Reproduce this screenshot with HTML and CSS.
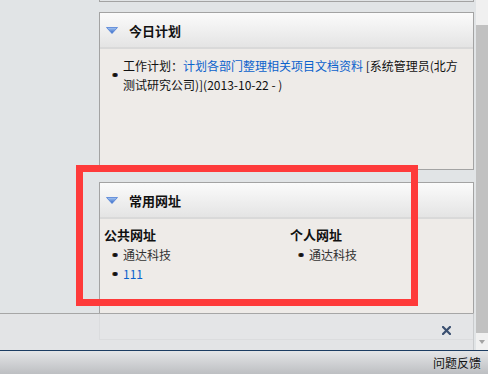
FILE: index.html
```html
<!DOCTYPE html>
<html lang="zh-CN">
<head>
  <meta charset="UTF-8">
  <title>我的桌面</title>
  <link rel="stylesheet" href="styles.css">
</head>
<body>
  <div class="desk">
    <div class="main">
      <div class="portal">
        <div class="panel-stub"></div>

        <!-- 今日计划 -->
        <div class="panel">
          <div class="panel-head">
            <svg class="tri" width="12" height="7" viewBox="0 0 12 7">
              <defs>
                <linearGradient id="g1" x1="0" y1="0" x2="0" y2="1">
                  <stop offset="0" stop-color="#a9c8f2"/>
                  <stop offset="1" stop-color="#2d64c6"/>
                </linearGradient>
              </defs>
              <polygon points="0.5,0.5 11.5,0.5 6,6.5" fill="url(#g1)" stroke="#4f7fd6" stroke-width="0.8"/>
            </svg>
            <span class="panel-title">今日计划</span>
          </div>
          <div class="panel-body">
            <div class="plan-item">
              <span class="dot"></span>
              <p class="plan-text">工作计划：<a href="#" class="link">计划各部门整理相关项目文档资料</a> [系统管理员(北方测试研究公司)](2013-10-22 - )</p>
            </div>
          </div>
        </div>

        <!-- 常用网址 -->
        <div class="panel">
          <div class="panel-head">
            <svg class="tri" width="12" height="7" viewBox="0 0 12 7">
              <defs>
                <linearGradient id="g2" x1="0" y1="0" x2="0" y2="1">
                  <stop offset="0" stop-color="#a9c8f2"/>
                  <stop offset="1" stop-color="#2d64c6"/>
                </linearGradient>
              </defs>
              <polygon points="0.5,0.5 11.5,0.5 6,6.5" fill="url(#g2)" stroke="#4f7fd6" stroke-width="0.8"/>
            </svg>
            <span class="panel-title">常用网址</span>
          </div>
          <div class="panel-body url-cols">
            <div class="url-col">
              <h3>公共网址</h3>
              <ul>
                <li><span class="dot"></span><span>通达科技</span></li>
                <li><span class="dot"></span><a href="#" class="link">111</a></li>
              </ul>
            </div>
            <div class="url-col">
              <h3>个人网址</h3>
              <ul>
                <li><span class="dot"></span><span>通达科技</span></li>
              </ul>
            </div>
          </div>
        </div>

        <!-- bottom close bar over the portal -->
        <div class="closebar">
          <svg class="close" width="9" height="9" viewBox="0 0 9 9">
            <path d="M1 1 L8 8 M8 1 L1 8" stroke="#3a4f70" stroke-width="2.2" stroke-linecap="square"/>
          </svg>
        </div>
      </div>

      <div class="scrollbar">
        <div class="thumb"></div>
        <div class="arrow"></div>
      </div>
    </div>

    <div class="statusbar">问题反馈</div>
  </div>

  <div class="mark"></div>
</body>
</html>
```

FILE: styles.css
```css
body {
  margin: 0;
  font-family: "Noto Sans CJK SC", sans-serif;
  font-size: 12px;
  color: #111;
}
.desk {
  width: 488px;
  height: 374px;
  display: flex;
  flex-direction: column;
  background: #e1e4e6;
}
.main {
  display: flex;
  height: 350px;
}
.portal {
  position: relative;
  width: 476px;
  padding-left: 99px;
  box-sizing: border-box;
}
.panel-stub {
  width: 373px;
  height: 1px;
  border: 1px solid #a3a3a3;
  border-top: none;
}
.panel {
  width: 375px;
  box-sizing: border-box;
  border: 1px solid #a3a3a3;
  margin-top: 10px;
}
.panel + .panel {
  margin-top: 12px;
}
.panel-head {
  height: 34px;
  display: flex;
  align-items: center;
  padding-left: 6px;
  background: linear-gradient(#fbfbfb, #e4e4e4);
  border-bottom: 2px solid #d9d9d9;
}
.tri {
  display: block;
  margin-top: 1px;
}
.panel-title {
  margin-left: 11px;
  font-size: 13px;
  font-weight: bold;
  color: #111;
}
.panel-body {
  height: 120px;
  background: #eeebe8;
  box-sizing: border-box;
}
.dot {
  width: 4px;
  height: 4px;
  border-radius: 50%;
  background: #111;
  box-shadow: -1px 0 0 #b36a1a, 1px 0 0 #1d4fb0;
  flex: none;
}
.link {
  color: #0b62cc;
  text-decoration: none;
}
.plan-item {
  display: flex;
  align-items: center;
  padding: 7px 4px 0 13px;
}
.plan-item .dot {
  margin-right: 6px;
}
.plan-text {
  margin: 0;
  line-height: 19px;
}
.url-cols {
  display: grid;
  grid-template-columns: 186px 1fr;
  padding: 6px 4px 0;
}
.url-col h3 {
  margin: 0;
  font-size: 13px;
  line-height: 20px;
  color: #111;
}
.url-col ul {
  list-style: none;
  margin: 0;
  padding-left: 9px;
}
.url-col li {
  display: flex;
  align-items: center;
  line-height: 19px;
  color: #333;
}
.url-col li .dot {
  margin-right: 6px;
}
.closebar {
  position: absolute;
  left: 0;
  top: 313px;
  width: 474px;
  height: 37px;
  box-sizing: border-box;
  border-top: 1px solid #a6a6a6;
  border-right: 1px solid #c9cbcd;
  background: rgba(226, 228, 230, 0.88);
}
.close {
  position: absolute;
  left: 442px;
  top: 12px;
}
.scrollbar {
  width: 12px;
  display: flex;
  flex-direction: column;
  background: #f0f0f0;
  padding-top: 25px;
  box-sizing: border-box;
}
.thumb {
  height: 308px;
  background: #c1c1c1;
}
.arrow {
  width: 0;
  height: 0;
  margin: 7px auto 0;
  border-left: 3px solid transparent;
  border-right: 3px solid transparent;
  border-top: 4px solid #a3a3a3;
}
.statusbar {
  height: 23px;
  border-top: 1px solid #1c3c62;
  background: linear-gradient(#e4e5e7, #bdbfc2);
  text-align: right;
  padding-right: 7px;
  line-height: 23px;
  font-size: 12px;
  color: #111;
}
.mark {
  position: absolute;
  left: 76px;
  top: 165px;
  width: 342px;
  height: 141px;
  box-sizing: border-box;
  border: 7px solid #fe3a3a;
}
```
